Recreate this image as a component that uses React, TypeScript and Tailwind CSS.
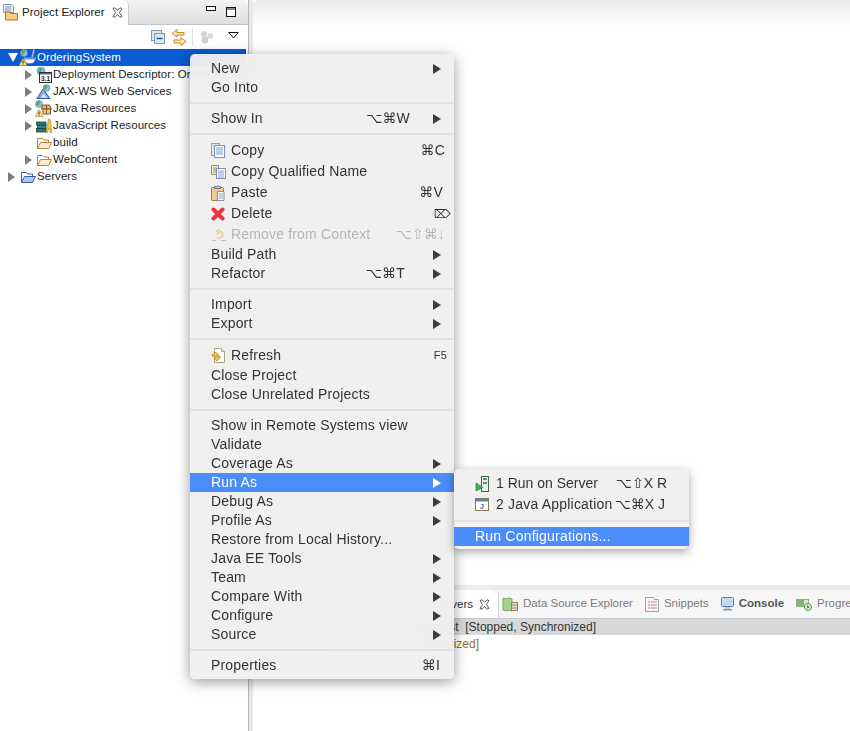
import type { ReactNode } from 'react';

const ui = '"Liberation Sans", "DejaVu Sans", sans-serif';

function Folder({ blue }: { blue?: boolean }) {
  const edge = blue ? '#3a5aa8' : '#b8863a';
  const fill = blue ? '#a9c8f2' : '#fdeccb';
  return (
    <svg width="16" height="14" viewBox="0 0 16 14">
      <path d="M1.500 12V2.500h5l1.500 1.500h4.500V6" fill="#fff" stroke={edge} />
      <path d="M1.500 12.500L4.500 6.500h11l-3 6z" fill={fill} stroke={edge} />
    </svg>
  );
}

function Twistie({ open, white }: { open?: boolean; white?: boolean }) {
  if (open) {
    return (
      <svg width="10" height="9" viewBox="0 0 10 9">
        <path d="M0 0h10L5 9z" fill={white ? '#fff' : '#777'} />
      </svg>
    );
  }
  return (
    <svg width="7" height="10" viewBox="0 0 7 10">
      <path d="M0 0l7 5-7 5z" fill="#7d7d7d" />
    </svg>
  );
}

function Warn({ x = 0, y = 9 }: { x?: number; y?: number }) {
  return (
    <g transform={`translate(${x} ${y})`}>
      <path d="M4 0l4 7H0z" fill="#fbe08a" stroke="#b08a22" strokeWidth=".6" />
      <rect x="3.500" y="2" width="1" height="2.600" fill="#222" />
      <rect x="3.500" y="5" width="1" height="1" fill="#222" />
    </g>
  );
}

function Globe({ x = 5, y = 4, r = 3.500 }: { x?: number; y?: number; r?: number }) {
  return (
    <g>
      <circle cx={x} cy={y} r={r} fill="#86bde6" stroke="#5b8db5" strokeWidth=".6" />
      <path d={`M${x - 2} ${y - 2.500}h3v2h-1.500v2h-2z`} fill="#58a548" />
    </g>
  );
}

function ProjectIcon() {
  return (
    <svg width="17" height="17" viewBox="0 0 17 17">
      <Globe x={5} y={4} />
      <path d="M5 8.500h11.500c0 3-1.500 5.500-3.500 6H8c-1.500-.5-3-3-3-6z" fill="#f4f7fc" stroke="#5f82b8" strokeWidth=".9" />
      <path d="M6 9h10l-.4 1.500H6.400z" fill="#6c93d0" />
      <path d="M12.500 8l1.800-7.500 1.400.3L14 8z" fill="#e3ebf6" stroke="#4f74ab" strokeWidth=".6" />
      <Warn x={0} y={9.500} />
    </svg>
  );
}

function DeployIcon() {
  return (
    <svg width="16" height="16" viewBox="0 0 16 16">
      <Globe x={5} y={4} r={4} />
      <rect x="3.500" y="5.500" width="12" height="10" fill="#fff" stroke="#2c2c2c" />
      <rect x="4" y="6" width="11" height="1.500" fill="#5a6a80" />
      <text x="5" y="14" fontSize="6.500" fontWeight="700" fontFamily={ui} fill="#222">3.1</text>
    </svg>
  );
}

function JaxIcon() {
  return (
    <svg width="16" height="16" viewBox="0 0 16 16">
      <path d="M1 14.500L7 5l7 9.500z" fill="#8aa6e2" stroke="#35559f" />
      <path d="M4.500 14l3-5 3.500 5z" fill="#d6e2f8" />
      <Globe x={10.500} y={4} r={3.500} />
    </svg>
  );
}

function JavaResIcon() {
  return (
    <svg width="17" height="17" viewBox="0 0 17 17">
      <Globe x={4} y={4} />
      <path d="M7.500 5h7l2 4H6.500z" fill="#e6b877" stroke="#7d4a1c" strokeWidth=".9" />
      <path d="M8 9h7.500v5H8z" fill="#f1cc8c" stroke="#7d4a1c" strokeWidth=".9" />
      <path d="M11.500 5v9" stroke="#7d4a1c" strokeWidth=".9" />
      <Warn x={0} y={9.500} />
    </svg>
  );
}

function JsResIcon() {
  return (
    <svg width="16" height="15" viewBox="0 0 16 15">
      <rect x=".5" y="10.500" width="9.500" height="3.500" fill="#1d8458" stroke="#0e3d2a" strokeWidth=".7" />
      <rect x="1.500" y="7" width="8.500" height="3.500" fill="#3a78bb" stroke="#12304d" strokeWidth=".7" />
      <rect x=".5" y="4" width="9.500" height="3" fill="#1d8458" stroke="#0e3d2a" strokeWidth=".7" />
      <path d="M10 14.500L12.500 1h1.500l2 13.500h-1.800l-.7-4h-1l-.8 4z" fill="#f4c03a" stroke="#a07214" strokeWidth=".5" />
    </svg>
  );
}

function CopyIcon() {
  return (
    <svg width="15" height="15" viewBox="0 0 15 15">
      <rect x=".5" y=".5" width="8" height="12" fill="#dfe7ef" stroke="#8e9fb2" />
      <rect x="3.500" y="2.500" width="10" height="12" fill="#fff" stroke="#7f90a6" />
      <path d="M5 5h7M5 7h7M5 9h7M5 11h7" stroke="#7ba0cf" />
    </svg>
  );
}

function CopyNameIcon() {
  return (
    <svg width="15" height="15" viewBox="0 0 15 15">
      <path d="M.5 1.500h7v9h-7z" fill="#f5e6bc" stroke="#a59560" />
      <rect x="5.500" y="4.500" width="9" height="10" fill="#fff" stroke="#7f90a6" />
      <path d="M2 4h4M2 6h3M2 8h3M7 7h6M7 9h6M7 11h6M7 13h6" stroke="#7ba0cf" />
    </svg>
  );
}

function PasteIcon() {
  return (
    <svg width="14" height="16" viewBox="0 0 14 16">
      <rect x=".5" y="2.500" width="12" height="13" rx="1" fill="#efc98e" stroke="#a07a44" />
      <path d="M3.500 3.500V1.500h2l1-1 1 1h2v2z" fill="#bcc3cc" stroke="#6f7886" />
      <path d="M6.500 6.500h6.500v9H6.500z" fill="#fff" stroke="#7f90a6" />
      <path d="M8 9h4M8 11h4M8 13h4" stroke="#7ba0cf" />
    </svg>
  );
}

function DeleteIcon() {
  return (
    <svg width="14" height="14" viewBox="0 0 14 14">
      <path d="M2.500 2.500l9 9M11.500 2.500l-9 9" stroke="#ea3540" strokeWidth="4" strokeLinecap="round" />
    </svg>
  );
}

function RemoveIcon() {
  return (
    <svg width="16" height="14" viewBox="0 0 16 14">
      <path d="M5 3h3.500a3.500 3.500 0 0 1 0 7H6" fill="#f8eecb" stroke="#d8bf80" />
      <path d="M7 1l3 2.500L7 6z" fill="#f6e8b8" stroke="#d8bf80" strokeWidth=".6" />
      <path d="M1 12.500h4M10 12.500h5" stroke="#c4c4c4" />
    </svg>
  );
}

function RefreshIcon() {
  return (
    <svg width="15" height="15" viewBox="0 0 15 15">
      <path d="M3.500.5h7l3 3v11h-10z" fill="#fff" stroke="#a7a38c" />
      <path d="M10.500.5v3h3" fill="#f0e6c2" stroke="#a7a38c" />
      <path d="M1 7l3-3 3 2v2H1zM9 8v2l-3 3-3-2v-1z" fill="#f0c848" stroke="#a97b10" strokeWidth=".7" />
    </svg>
  );
}

function RunServerIcon() {
  return (
    <svg width="15" height="16" viewBox="0 0 15 16">
      <rect x="6.500" y=".5" width="7" height="15" fill="#e9edf0" stroke="#44634d" />
      <rect x="8" y="2" width="4" height="2" fill="#4ba15a" />
      <rect x="8" y="6" width="4" height="2" fill="#4ba15a" />
      <path d="M1 7l7 4.500L1 15z" fill="#3fb05a" stroke="#1f7a3a" strokeWidth=".6" />
    </svg>
  );
}

function JavaAppIcon() {
  return (
    <svg width="15" height="15" viewBox="0 0 15 15">
      <rect x=".5" y="1.500" width="13" height="12" fill="#fff" stroke="#8a7a50" />
      <rect x="1" y="2" width="12" height="2.500" fill="#4d86c6" />
      <text x="5" y="11.500" fontSize="7" fontWeight="700" fontFamily={ui} fill="#335f9e">J</text>
    </svg>
  );
}

function SubArrow({ white }: { white?: boolean }) {
  return (
    <svg width="8" height="10" viewBox="0 0 8 10">
      <path d="M0 0l8 5-8 5z" fill={white ? '#fff' : '#3c3c3c'} />
    </svg>
  );
}

function CloseGlyph({ className }: { className?: string }) {
  return (
    <svg className={className} width="11" height="11" viewBox="0 0 11 11">
      <path d="M1 1.500L3 .8l2.500 2.500L8 .8l2 .7-2.500 4 2.500 4-2 .7L5.500 7.500 3 10.200l-2-.7 2.500-4z" fill="#fff" stroke="#333" strokeWidth=".8" />
    </svg>
  );
}

type Entry = {
  label?: string;
  icon?: ReactNode;
  keys?: string;
  keysClass?: string;
  more?: boolean;
  active?: boolean;
  disabled?: boolean;
};

const entries: Entry[] = [
  { label: 'New', more: true },
  { label: 'Go Into' },
  {},
  { label: 'Show In', keys: '⌥⌘W', keysClass: 'mr-[23px]', more: true },
  {},
  { label: 'Copy', icon: <CopyIcon />, keys: '⌘C', keysClass: 'mr-[9px]' },
  { label: 'Copy Qualified Name', icon: <CopyNameIcon /> },
  { label: 'Paste', icon: <PasteIcon />, keys: '⌘V', keysClass: 'mr-[11px]' },
  { label: 'Delete', icon: <DeleteIcon />, keys: '⌦', keysClass: 'mr-[3px] text-[12px]' },
  { label: 'Remove from Context', icon: <RemoveIcon />, keys: '⌥⇧⌘↓', keysClass: 'mr-[9px]', disabled: true },
  { label: 'Build Path', more: true },
  { label: 'Refactor', keys: '⌥⌘T', keysClass: 'mr-[28px]', more: true },
  {},
  { label: 'Import', more: true },
  { label: 'Export', more: true },
  {},
  { label: 'Refresh', icon: <RefreshIcon />, keys: 'F5', keysClass: 'mr-[7px] text-[11px]' },
  { label: 'Close Project' },
  { label: 'Close Unrelated Projects' },
  {},
  { label: 'Show in Remote Systems view' },
  { label: 'Validate' },
  { label: 'Coverage As', more: true },
  { label: 'Run As', more: true, active: true },
  { label: 'Debug As', more: true },
  { label: 'Profile As', more: true },
  { label: 'Restore from Local History...' },
  { label: 'Java EE Tools', more: true },
  { label: 'Team', more: true },
  { label: 'Compare With', more: true },
  { label: 'Configure', more: true },
  { label: 'Source', more: true },
  {},
  { label: 'Properties', keys: '⌘I', keysClass: 'mr-[14px]' },
];

function MenuRow({ e }: { e: Entry }) {
  if (!e.label) {
    return (
      <div className="flex h-[12px] items-center">
        <div className="h-[2px] w-full bg-[#e2e2e2]" />
      </div>
    );
  }
  return (
    <div
      className={`flex items-center pl-[21px] ${e.icon ? 'h-[21px]' : 'h-[19px]'} ${
        e.active ? 'bg-[#4a8cf8] text-white' : e.disabled ? 'text-[#b5b5b5]' : 'text-[#333333]'
      }`}
    >
      {e.icon && <span className="flex w-[20px] shrink-0 items-center">{e.icon}</span>}
      <span className="whitespace-nowrap">{e.label}</span>
      {e.keys && <span className={`ml-auto whitespace-nowrap ${e.keysClass}`}>{e.keys}</span>}
      {e.more && (
        <span className={`flex w-[21px] shrink-0 ${e.keys ? '' : 'ml-auto'}`}>
          <SubArrow white={e.active} />
        </span>
      )}
    </div>
  );
}

const tree = [
  { label: 'OrderingSystem', icon: <ProjectIcon />, open: true, selected: true },
  { label: 'Deployment Descriptor: OrderingSystem', icon: <DeployIcon />, child: true, twistie: true },
  { label: 'JAX-WS Web Services', icon: <JaxIcon />, child: true, twistie: true },
  { label: 'Java Resources', icon: <JavaResIcon />, child: true, twistie: true },
  { label: 'JavaScript Resources', icon: <JsResIcon />, child: true, twistie: true },
  { label: 'build', icon: <Folder />, child: true },
  { label: 'WebContent', icon: <Folder />, child: true, twistie: true },
  { label: 'Servers', icon: <Folder blue />, twistie: true },
];

function TreeRow({ row }: { row: (typeof tree)[number] }) {
  return (
    <div
      className={`flex h-[17px] items-center whitespace-nowrap ${row.child ? 'pl-[25px]' : 'pl-[8px]'} ${
        row.selected ? 'mr-[2px] h-[16px] bg-[#0b5bd3] text-white' : 'text-[#1c1c1c]'
      }`}
    >
      <span className={`flex shrink-0 ${row.child ? 'w-[10px]' : 'w-[11px]'}`}>
        {(row.open || row.twistie) && <Twistie open={row.open} white={row.selected} />}
      </span>
      <span className="flex w-[17px] shrink-0 justify-center">{row.icon}</span>
      <span className="ml-[1px]">{row.label}</span>
    </div>
  );
}

function Explorer() {
  return (
    <div className="flex w-[249px] shrink-0 flex-col overflow-hidden border-r border-[#b4b4b4] bg-white">
      <div className="flex h-[25px] items-stretch rounded-tr-[6px] border-b border-[#bcc3cd] bg-gradient-to-b from-[#f4f4f4] to-[#dedede]">
        <div className="mb-[-1px] flex w-[129px] items-center rounded-tr-[6px] border-r border-[#c8ccd2] bg-white pl-[2px]">
          <svg width="17" height="17" viewBox="0 0 17 17">
            <path d="M1.500.5h8l2 2v6h-10z" fill="#e9edf3" stroke="#8b96a8" />
            <path d="M3 3h6M3 5h6M3 7h6" stroke="#7c9cc8" />
            <path d="M3.500 16V8h4l1 1.500h7V16z" fill="#f5cf7a" stroke="#a8752b" />
          </svg>
          <span className="ml-[3px] text-[11.500px] tracking-[.05px] text-[#1a1a1a]">Project Explorer</span>
          <CloseGlyph className="ml-[7px]" />
        </div>
        <div className="ml-auto flex items-center gap-[9px] pr-[11px]">
          <svg className="mb-[6px]" width="11" height="6" viewBox="0 0 11 6">
            <rect x=".5" y=".5" width="9" height="4" fill="#fff" stroke="#111" />
          </svg>
          <svg width="11" height="11" viewBox="0 0 11 11">
            <rect x=".5" y=".5" width="9" height="9" fill="#fff" stroke="#111" />
            <path d="M0 2h10" stroke="#111" />
          </svg>
        </div>
      </div>
      <div className="flex h-[24px] items-center justify-end pr-[9px]">
        <svg width="14" height="14" viewBox="0 0 14 14">
          <rect x=".5" y=".5" width="10" height="10" fill="#dbe7f3" stroke="#7f97b3" />
          <rect x="3.500" y="3.500" width="10" height="10" fill="#dbe7f3" stroke="#7f97b3" />
          <path d="M5.500 8.500h6" stroke="#1d4f9c" strokeWidth="1.400" />
        </svg>
        <svg className="ml-[6px]" width="16" height="17" viewBox="0 0 16 17">
          <path d="M6 .5L1 4.500l5 3.500V6h7V3.500H6zM10 8.500l5 4-5 4V14H3v-3h7z" fill="#f8e8b8" stroke="#c88a1c" />
        </svg>
        <div className="ml-[5px] h-[18px] w-px bg-[#e0e0e0]" />
        <svg className="ml-[7px]" width="14" height="14" viewBox="0 0 14 14">
          <circle cx="4" cy="4" r="3" fill="#d4d4d4" />
          <circle cx="10.500" cy="6" r="3" fill="#dcdcdc" />
          <circle cx="5" cy="10" r="3.400" fill="#cfcfcf" />
        </svg>
        <svg className="mb-[4px] ml-[14px]" width="11" height="7" viewBox="0 0 11 7">
          <path d="M.8.500h9.400L5.500 6z" fill="#fff" stroke="#111" />
        </svg>
      </div>
      <div className="text-[11.500px] leading-[17px] tracking-[.06px]">
        {tree.map(row => (
          <TreeRow key={row.label} row={row} />
        ))}
      </div>
    </div>
  );
}

function BottomTab({ icon, label, bold, className }: { icon: ReactNode; label: string; bold?: boolean; className?: string }) {
  return (
    <div className={`flex shrink-0 items-center whitespace-nowrap ${className ?? ''} ${bold ? 'font-bold text-[#555555]' : 'text-[#7a7a7a]'}`}>
      {icon}
      <span className="ml-[5px]">{label}</span>
    </div>
  );
}

function BottomPanel() {
  return (
    <div className="flex h-[141px] flex-col overflow-hidden bg-white text-[11.500px] text-[#333333]">
      <div className="flex h-[29px] items-stretch overflow-hidden rounded-tl-[6px] border-b border-[#c3c9d1] bg-[#f6f6f6]">
        <div className="mb-[-1px] flex w-[246px] shrink-0 items-center justify-end rounded-tr-[6px] border-r border-[#d0d4da] bg-white pr-[8px]">
          <span>Servers</span>
          <CloseGlyph className="ml-[6px]" />
        </div>
        <div className="ml-[3px] flex items-center">
          <BottomTab
            label="Data Source Explorer"
            icon={
              <svg width="16" height="16" viewBox="0 0 16 16">
                <path d="M1 2l3 1 3-1 3 1v12l-3-1-3 1-3-1z" fill="#a9d08a" stroke="#7aa860" />
                <rect x="9.500" y="6.500" width="6" height="8" fill="#e7dfc8" stroke="#8c8466" />
                <path d="M10 9h5M10 12h5" stroke="#8c8466" />
              </svg>
            }
          />
          <BottomTab
            className="ml-[12px]"
            label="Snippets"
            icon={
              <svg width="14" height="15" viewBox="0 0 14 15">
                <path d="M.5.5h8l1 2h4v12H.5z" fill="#f6f6f6" stroke="#98a3b2" />
                <path d="M3 5h2M6 5h6M3 8h2M6 8h6M3 11h2M6 11h6" stroke="#d07a7a" />
              </svg>
            }
          />
          <BottomTab
            bold
            className="ml-[12px]"
            label="Console"
            icon={
              <svg width="13" height="14" viewBox="0 0 13 14">
                <rect x=".5" y=".5" width="12" height="9" rx="1" fill="#c6d9ef" stroke="#5a80b0" />
                <path d="M4 10.500h5v1H4zM2 12h9v1.500H2z" fill="#7f9dc3" />
              </svg>
            }
          />
          <BottomTab
            className="ml-[12px]"
            label="Progress"
            icon={
              <svg width="16" height="13" viewBox="0 0 16 13">
                <rect x=".5" y="1.500" width="12" height="7" fill="#d8e8d0" stroke="#93a98a" />
                <rect x="1" y="2" width="7" height="6" fill="#7fb870" />
                <circle cx="12" cy="9" r="3.500" fill="#e8f4e0" stroke="#4a9a50" />
                <path d="M11 7l3 2-3 2z" fill="#3e9e48" />
              </svg>
            }
          />
        </div>
      </div>
      <div className="flex h-[16px] items-center justify-end whitespace-nowrap bg-[#d8d8d8] pr-[254px] text-[12px]">
        Tomcat v8.0 Server at localhost&nbsp; [Stopped, Synchronized]
      </div>
      <div className="flex h-[17px] items-center justify-end whitespace-nowrap pr-[371px] text-[12px] text-[#97702b]">
        OrderingSystem [Synchronized]
      </div>
    </div>
  );
}

export default function App() {
  return (
    <div className="relative flex h-[731px] w-[850px] overflow-hidden bg-white" style={{ fontFamily: ui }}>
      <Explorer />
      <div className="w-[4px] shrink-0 bg-[#e9e9e9]" />
      <div className="flex min-w-0 flex-1 flex-col">
        <div className="flex-1 rounded-tl-[6px] bg-gradient-to-b from-[#ebebeb] to-white bg-[length:100%_26px] bg-no-repeat" />
        <div className="h-[5px] bg-[#ececec]" />
        <BottomPanel />
      </div>

      <div className="absolute left-[190px] top-[54px] w-[264px] rounded-[5px] bg-[#efefef]/95 pb-[4px] pt-[5px] text-[14px] tracking-[.17px] shadow-[0_3px_14px_rgba(0,0,0,.4)] backdrop-blur-lg">
        {entries.map((e, i) => (
          <MenuRow key={i} e={e} />
        ))}
      </div>

      <div className="absolute left-[454px] top-[469px] w-[235px] rounded-[5px] bg-[#f0f0f0] pb-[3px] pt-[4px] text-[14px] text-[#333333] shadow-[0_3px_10px_rgba(0,0,0,.35)]">
        <div className="flex h-[21px] items-center pl-[21px]">
          <span className="flex w-[21px]"><RunServerIcon /></span>
          <span>1 Run on Server</span>
          <span className="ml-auto mr-[22px]">⌥⇧X R</span>
        </div>
        <div className="flex h-[21px] items-center pl-[21px]">
          <span className="flex w-[21px]"><JavaAppIcon /></span>
          <span className="tracking-[.2px]">2 Java Application</span>
          <span className="ml-auto mr-[24px]">⌥⌘X J</span>
        </div>
        <div className="flex h-[12px] items-center">
          <div className="h-[2px] w-full bg-[#e2e2e2]" />
        </div>
        <div className="flex h-[19px] items-center bg-[#4a8cf8] pl-[21px] tracking-[.2px] text-white">Run Configurations...</div>
      </div>
    </div>
  );
}
